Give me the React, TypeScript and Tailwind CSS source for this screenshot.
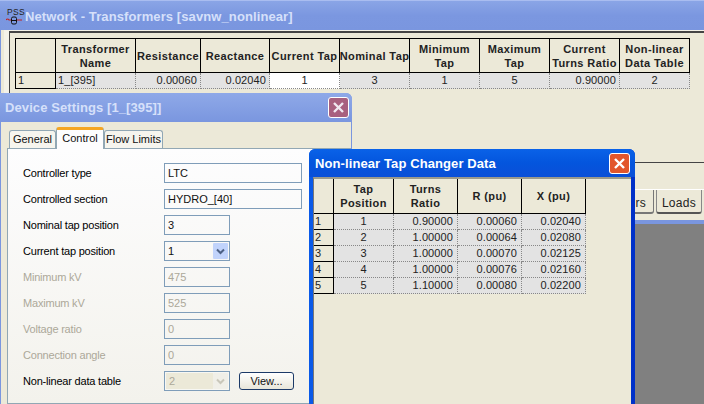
const mainCols = [
  { label: ["Transformer", "Name"], w: "w-[80px]" },
  { label: ["Resistance"], w: "w-[65px]" },
  { label: ["Reactance"], w: "w-[69px]" },
  { label: ["Current Tap"], w: "w-[70px]" },
  { label: ["Nominal Tap"], w: "w-[70px]" },
  { label: ["Minimum", "Tap"], w: "w-[70px]" },
  { label: ["Maximum", "Tap"], w: "w-[70px]" },
  { label: ["Current", "Turns Ratio"], w: "w-[70px]" },
  { label: ["Non-linear", "Data Table"], w: "w-[70px]" },
];

const mainRow = [
  { v: "1_[395]", a: "text-left pl-[2px]" },
  { v: "0.00060", a: "text-right pr-[3px]" },
  { v: "0.02040", a: "text-right pr-[3px]" },
  { v: "1", a: "text-center", white: true },
  { v: "3", a: "text-center" },
  { v: "1", a: "text-center" },
  { v: "5", a: "text-center" },
  { v: "0.90000", a: "text-right pr-[3px]" },
  { v: "2", a: "text-center" },
];

const tapCols = [
  { label: ["Tap", "Position"], w: "w-[60px]" },
  { label: ["Turns", "Ratio"], w: "w-[64px]" },
  { label: ["R (pu)"], w: "w-[64px]" },
  { label: ["X (pu)"], w: "w-[64px]" },
];

const tapRows = [
  ["1", "0.90000", "0.00060", "0.02040"],
  ["2", "1.00000", "0.00064", "0.02080"],
  ["3", "1.00000", "0.00070", "0.02125"],
  ["4", "1.00000", "0.00076", "0.02160"],
  ["5", "1.10000", "0.00080", "0.02200"],
];

function HeaderCell({ label, w }: { label: string[]; w: string }) {
  return (
    <div className={`${w} h-full shrink-0 border-r border-b border-black flex flex-col items-center justify-center text-[11px] leading-[14px] font-bold tracking-[0.4px] text-[#222] bg-[#ece9d8] whitespace-nowrap`}>
      {label.map(l => <span key={l}>{l}</span>)}
    </div>
  );
}

function CloseButton({ active }: { active?: boolean }) {
  return (
    <div className={`w-[21px] h-[21px] rounded-[3px] border border-white flex items-center justify-center ${active ? "bg-[#e2562c]" : "bg-[#a8607f]"}`}>
      <svg width="13" height="13" viewBox="0 0 13 13">
        <path d="M2 2 L11 11 M11 2 L2 11" stroke={active ? "#ffffff" : "#f0e8f0"} strokeWidth="2.4" />
      </svg>
    </div>
  );
}

function Field({ label, value, w, disabled, select, selectDisabled, labelDark }: {
  label: string; value: string; w: string; disabled?: boolean; select?: boolean; selectDisabled?: boolean; labelDark?: boolean;
}) {
  const labelColor = disabled && !labelDark ? "text-[#aca899]" : "text-black";
  return (
    <div className="flex items-center h-[20px] mb-[6px]">
      <span className={`w-[141px] shrink-0 text-[11px] tracking-[-0.2px] ${labelColor}`}>{label}</span>
      <div className={`${w} h-[20px] border border-[#7f9db9] flex items-center ${selectDisabled ? "bg-[#f7f7f3]" : "bg-transparent"}`}>
        <span className={`flex-1 pl-[3px] text-[11px] ${disabled ? "text-[#aca899]" : "text-[#111]"} ${selectDisabled ? "bg-[#ece9d8] h-[16px] ml-[1px] leading-[16px]" : ""}`}>{value}</span>
        {select && (
          <div className={`w-[15px] h-[16px] mr-[1px] rounded-[1px] flex items-center justify-center ${selectDisabled ? "bg-[#f0efe8]" : "bg-[#c1d3fb]"}`}>
            <svg width="9" height="7" viewBox="0 0 9 7">
              <path d="M1 1.5 L4.5 5 L8 1.5" fill="none" stroke={selectDisabled ? "#c9c7ba" : "#4d6185"} strokeWidth="2" />
            </svg>
          </div>
        )}
      </div>
    </div>
  );
}

export default function App() {
  return (
    <div className="relative w-[704px] h-[404px] overflow-hidden bg-[#808080] font-['Liberation_Sans',Arial,sans-serif]">
      {/* network window */}
      <div className="h-[224px] flex flex-col bg-[#ece9d8]">
        <div className="h-[30px] shrink-0 flex items-center pl-[7px] pt-[3px] gap-[3px] bg-gradient-to-b from-[#8aa5e6] via-[#7b97e0] to-[#7a96df] border-t border-[#a9bdf0]">
          <div className="w-[15px] h-[18px] relative shrink-0">
            <span className="block text-[8.5px] leading-[9px] text-[#222] tracking-[0.3px]">PSS</span>
            <svg width="16" height="9" viewBox="0 0 16 9" className="absolute -left-[1px] top-[8px]">
              <path d="M0 4 q1.5 -2 3 0 H5 M11 4 H16" stroke="#c02020" strokeWidth="1.2" fill="none" />
              <rect x="5.5" y="1" width="5" height="7" rx="1.5" fill="none" stroke="#111" strokeWidth="1" />
              <path d="M5 4.5 H11" stroke="#111" strokeWidth="1" />
            </svg>
          </div>
          <span className="text-[13px] font-bold text-[#d6e0fa] tracking-[0.1px] whitespace-nowrap">Network - Transformers [savnw_nonlinear]</span>
        </div>
        <div className="flex-1 flex flex-col pl-[3px] border-l-[1px] border-[#7a96df]">
          <div className="pl-[5px] pt-[1px] bg-[#f4f2e8]">
            <div className="h-[132px] border-l border-t-2 border-b border-[#444] bg-[#ece9d8] pl-[5px] pt-[5px]">
              <div className="flex h-[35px] border-l border-t border-black w-[675px]">
                <div className="w-[40px] h-full shrink-0 border-r border-b border-black bg-[#ece9d8]" />
                {mainCols.map(c => <HeaderCell key={c.label[0]} label={c.label} w={c.w} />)}
              </div>
              <div className="flex h-[16px] border-l border-black w-[675px] text-[11px] leading-[15px] tracking-[0.1px] text-[#222]">
                <div className="w-[40px] shrink-0 border-r border-b border-black pl-[2px] bg-[#ece9d8]">1</div>
                {mainRow.map((c, i) => (
                  <div key={i} className={`${mainCols[i].w} shrink-0 border-r border-b border-dotted border-[#888] ${c.a} ${c.white ? "bg-white" : "bg-[#e3e3e3]"}`}>{c.v}</div>
                ))}
              </div>
            </div>
          </div>
          <div className="h-[27px] shrink-0 border-b border-white" />
          <div className="h-[24px] shrink-0 flex justify-end pr-[2px] gap-[2px]">
            <div className="w-[60px] h-[24px] border-b-2 border-r border-[#777] rounded-b-[3px] text-right pr-[7px] text-[12px] leading-[26px] text-[#222] tracking-[0.3px]">rs</div>
            <div className="w-[46px] h-[24px] border border-b-2 border-t-0 border-[#888] border-b-[#555] rounded-b-[3px] text-center text-[12px] leading-[26px] text-[#222] tracking-[0.3px]">Loads</div>
          </div>
          <div className="h-[6px] shrink-0" />
        </div>
      </div>
      <div className="h-[4px] -mt-[4px] relative bg-[#7a96df]" />

      {/* device settings window */}
      <div className="absolute left-0 top-[93px] w-[352px] h-[311px] flex flex-col rounded-tr-[6px] bg-[#7a96df] overflow-hidden">
        <div className="h-[29px] shrink-0 flex items-center justify-between pl-[5px] pr-[3px] bg-gradient-to-b from-[#8fa9e8] to-[#7a96df]">
          <span className="mt-[1px] text-[13px] font-bold text-[#d6e0fa] tracking-[0.1px] whitespace-nowrap">Device Settings [1_[395]]</span>
          <CloseButton />
        </div>
        <div className="flex-1 mx-[1px] bg-[#ece9d8] pt-[5px] pl-[6px] flex flex-col">
          <div className="flex items-end h-[21px] pl-[2px] text-[11px] text-[#111] whitespace-nowrap">
            <div className="w-[47px] h-[18px] border border-b-0 border-[#91a7b4] rounded-t-[3px] bg-[#f6f5ee] text-center leading-[17px]">General</div>
            <div className="w-[48px] h-[22px] border-x border-[#91a7b4] border-t-[3px] border-t-[#f5a623] rounded-t-[3px] bg-[#fdfdfe] text-center leading-[17px] -mb-[1px] relative">Control</div>
            <div className="w-[59px] h-[18px] border border-b-0 border-[#91a7b4] rounded-t-[3px] bg-[#f6f5ee] text-center leading-[17px]">Flow Limits</div>
          </div>
          <div className="flex-1 border border-[#91a7b4] bg-gradient-to-b from-[#fdfdfe] to-[#f3f2ec] pl-[15px] pt-[14px]">
            <Field label="Controller type" value="LTC" w="w-[138px]" />
            <Field label="Controlled section" value="HYDRO_[40]" w="w-[138px]" />
            <Field label="Nominal tap position" value="3" w="w-[66px]" />
            <Field label="Current tap position" value="1" w="w-[66px]" select />
            <Field label="Minimum kV" value="475" w="w-[66px]" disabled />
            <Field label="Maximum kV" value="525" w="w-[66px]" disabled />
            <Field label="Voltage ratio" value="0" w="w-[66px]" disabled />
            <Field label="Connection angle" value="0" w="w-[66px]" disabled />
            <div className="flex items-center">
              <Field label="Non-linear data table" value="2" w="w-[66px]" disabled labelDark select selectDisabled />
              <div className="ml-[9px] mb-[6px] w-[55px] h-[18px] rounded-[3px] border border-[#1c3a68] bg-gradient-to-b from-white to-[#e8e6da] text-[11px] text-[#111] text-center leading-[16px]">View...</div>
            </div>
          </div>
        </div>
      </div>

      {/* non-linear tap changer window */}
      <div className="absolute left-[309px] top-[149px] w-[326px] h-[255px] flex flex-col rounded-t-[6px] bg-gradient-to-r from-[#0a5ae8] to-[#0030c8] overflow-hidden">
        <div className="h-[28px] shrink-0 flex items-center justify-between pl-[6px] pr-[5px] bg-gradient-to-b from-[#0a62e8] via-[#0455dd] to-[#0a4fd8]">
          <span className="mt-[2px] text-[13px] font-bold text-white tracking-[0.1px] whitespace-nowrap">Non-linear Tap Changer Data</span>
          <CloseButton active />
        </div>
        <div className="flex-1 mx-[4px] bg-[#ece9d8] border-t-2 border-[#9c9a8c] border-l border-l-[#777]">
          <div className="flex h-[35px]">
            <div className="w-[20px] h-full shrink-0 border-r border-b border-black bg-[#ece9d8]" />
            {tapCols.map(c => <HeaderCell key={c.label[0]} label={c.label} w={c.w} />)}
          </div>
          {tapRows.map((r, i) => (
            <div key={i} className="flex h-[16px] text-[11px] leading-[15px] tracking-[0.1px] text-[#222]">
              <div className="w-[20px] shrink-0 border-r border-b border-black pl-[1px] bg-[#ece9d8]">{i + 1}</div>
              <div className="w-[60px] shrink-0 border-r border-b border-dotted border-[#888] bg-[#e3e3e3] text-center">{r[0]}</div>
              <div className="w-[64px] shrink-0 border-r border-b border-dotted border-[#888] bg-[#e3e3e3] text-right pr-[4px]">{r[1]}</div>
              <div className="w-[64px] shrink-0 border-r border-b border-dotted border-[#888] bg-[#e3e3e3] text-right pr-[4px]">{r[2]}</div>
              <div className="w-[64px] shrink-0 border-r border-b border-dotted border-[#888] bg-[#e3e3e3] text-right pr-[4px]">{r[3]}</div>
            </div>
          ))}
        </div>
      </div>
    </div>
  );
}
